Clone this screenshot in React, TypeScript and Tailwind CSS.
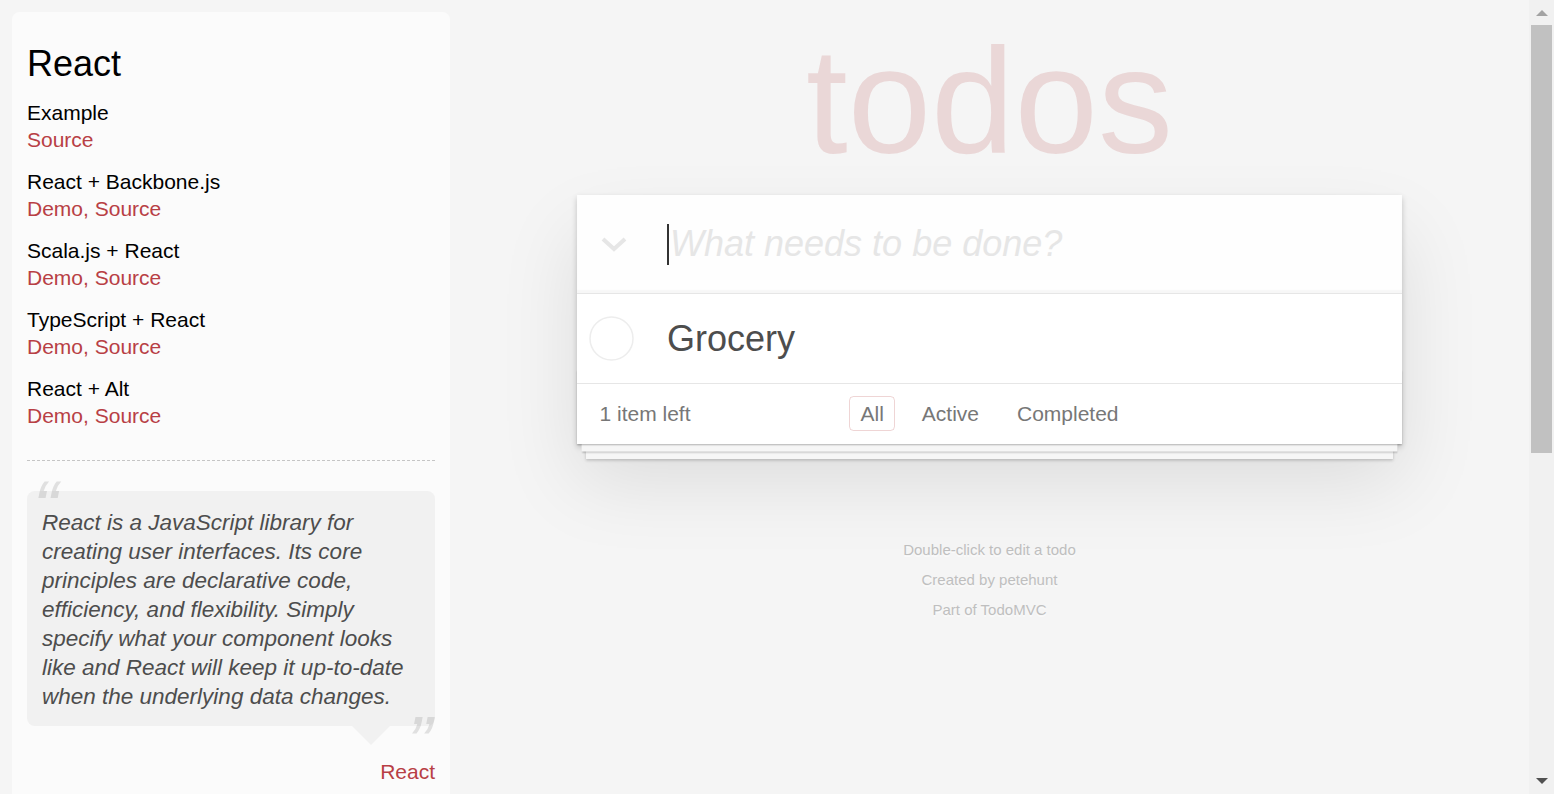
const groups: { name: string; links: string[] }[] = [
  { name: "Example", links: ["Source"] },
  { name: "React + Backbone.js", links: ["Demo", "Source"] },
  { name: "Scala.js + React", links: ["Demo", "Source"] },
  { name: "TypeScript + React", links: ["Demo", "Source"] },
  { name: "React + Alt", links: ["Demo", "Source"] },
];

function Sidebar() {
  return (
    <aside className="w-[450px] shrink-0 pl-3 pt-3">
      <div className="w-[438px] rounded-[7.5px] bg-[rgba(255,255,255,0.6)] px-[15px] pt-[15px] pb-[60px]">
        <h3 className="mt-[15px] mb-[14px] text-[36px] font-normal leading-[1.2] text-black">React</h3>
        <div className="flex flex-col gap-[15px] text-[21px] leading-[27px]">
          {groups.map((g) => (
            <div key={g.name}>
              <div className="text-black">{g.name}</div>
              <div className="text-[#b83f45]">
                {g.links.map((l, i) => (
                  <span key={l}>
                    {i > 0 ? ", " : ""}
                    <a className="text-[#b83f45]">{l}</a>
                  </span>
                ))}
              </div>
            </div>
          ))}
        </div>
        <div className="mt-[31px] mb-[30px] border-t-[1.5px] border-dashed border-[#c5c5c5]" />
        <div className="relative rounded-[7.5px] bg-[rgba(0,0,0,0.04)] px-[15px] pt-[17px] pb-[15px]">
          <span className="absolute left-[6px] top-[-32px] text-[75px] italic leading-[97.5px] text-[#4d4d4d] opacity-15">
            “
          </span>
          <p className="text-[22.5px] italic leading-[29px] text-[#4d4d4d]">
            React is a JavaScript library for creating user interfaces. Its core principles are declarative code,
            efficiency, and flexibility. Simply specify what your component looks like and React will keep it
            up-to-date when the underlying data changes.
          </p>
          <span className="absolute bottom-[-65px] right-[3px] text-[75px] italic leading-[97.5px] text-[#4d4d4d] opacity-15">
            ”
          </span>
          <div className="absolute right-[45px] top-full h-0 w-0 border-[19.5px] border-transparent border-t-[rgba(0,0,0,0.04)]" />
        </div>
        <div className="mt-[31px] text-right text-[21px] leading-[29.4px]">
          <a className="text-[#b83f45]">React</a>
        </div>
      </div>
    </aside>
  );
}

function TodoApp() {
  return (
    <main className="flex flex-1 flex-col items-center">
      <h1 className="mt-[26px] text-[150px] font-thin leading-[150px] text-[rgba(175,47,47,0.15)]">todos</h1>
      <section className="relative mt-[19px] w-[825px] bg-white shadow-[0_3px_6px_0_rgba(0,0,0,0.2),0_37.5px_75px_0_rgba(0,0,0,0.1)]">
        <div className="flex h-[98px] items-center bg-[rgba(0,0,0,0.003)] shadow-[inset_0_-3px_1.5px_rgba(0,0,0,0.03)]">
          <svg className="ml-[24px]" width="26" height="16" viewBox="0 0 26 16">
            <polyline points="2,3 13,13 24,3" fill="none" stroke="#e6e6e6" strokeWidth="4" />
          </svg>
          <span className="ml-[40px] h-[41px] w-[2px] bg-[#333]" />
          <span className="ml-[1px] text-[36px] italic leading-[50px] text-[#e6e6e6]">What needs to be done?</span>
        </div>
        <div className="flex h-[89.5px] items-center border-t-[1.5px] border-[#e6e6e6]">
          <svg className="ml-[12px]" width="45" height="45" viewBox="0 0 45 45">
            <circle cx="22.5" cy="22.5" r="21.5" fill="none" stroke="#ededed" strokeWidth="1.5" />
          </svg>
          <span className="ml-[33px] text-[36px] leading-[43px] text-[#4d4d4d]">Grocery</span>
        </div>
        <div className="relative grid h-[61.5px] grid-cols-[1fr_auto_1fr] items-center border-t-[1.5px] border-[#e6e6e6] px-[22.5px] text-[21px] text-[#777]">
          <div className="pointer-events-none absolute inset-x-0 bottom-0 h-[75px] shadow-[0_1.5px_1.5px_rgba(0,0,0,0.2),0_12px_0_-4.5px_#f6f6f6,0_13.5px_1.5px_-4.5px_rgba(0,0,0,0.2),0_24px_0_-9px_#f6f6f6,0_25.5px_3px_-9px_rgba(0,0,0,0.2)]" />
          <span className="leading-[29px]">1 item left</span>
          <div className="flex gap-[15px]">
            <a className="inline-block rounded-[4.5px] border-[1.5px] border-[rgba(175,47,47,0.2)] px-[10.5px] py-[4.5px] leading-[24px]">
              All
            </a>
            <a className="inline-block rounded-[4.5px] border-[1.5px] border-transparent px-[10.5px] py-[4.5px] leading-[24px]">
              Active
            </a>
            <a className="inline-block rounded-[4.5px] border-[1.5px] border-transparent px-[10.5px] py-[4.5px] leading-[24px]">
              Completed
            </a>
          </div>
          <span />
        </div>
      </section>
      <footer className="mt-[97.5px] flex flex-col items-center gap-[15px] text-[15px] leading-[15px] text-[#bfbfbf] [text-shadow:0_1.5px_0_rgba(255,255,255,0.5)]">
        <p>Double-click to edit a todo</p>
        <p>
          Created by <a>petehunt</a>
        </p>
        <p>
          Part of <a>TodoMVC</a>
        </p>
      </footer>
    </main>
  );
}

function Scrollbar() {
  return (
    <div className="flex w-[25px] shrink-0 flex-col items-center bg-[#f1f1f1]">
      <div className="flex h-[25px] w-full items-center justify-center">
        <svg width="12" height="7" viewBox="0 0 12 7">
          <polygon points="0,7 6,1 12,7" fill="#a3a3a3" />
        </svg>
      </div>
      <div className="h-[428px] w-[21px] bg-[#c1c1c1]" />
      <div className="flex-1" />
      <div className="flex h-[25px] w-full items-center justify-center">
        <svg width="12" height="7" viewBox="0 0 12 7">
          <polygon points="0,0 12,0 6,6" fill="#505050" />
        </svg>
      </div>
    </div>
  );
}

export default function App() {
  return (
    <div className="flex h-[794px] w-[1554px] overflow-hidden bg-[#f5f5f5] font-['Liberation_Sans',Arial,sans-serif] text-[#4d4d4d]">
      <Sidebar />
      <TodoApp />
      <Scrollbar />
    </div>
  );
}
